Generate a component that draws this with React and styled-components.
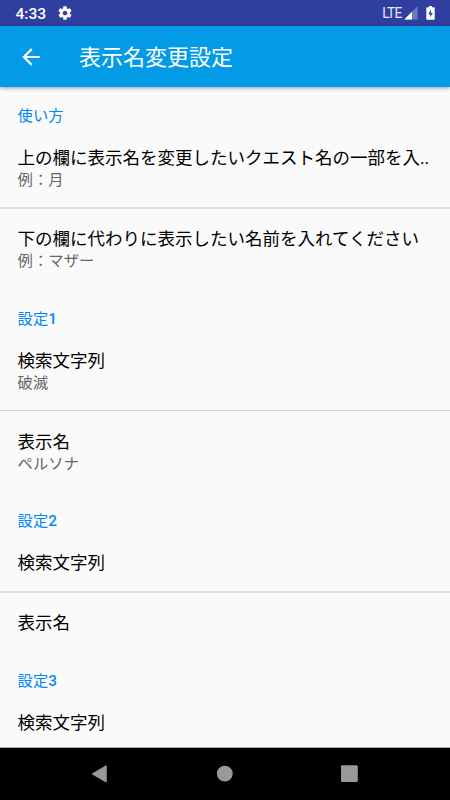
import styled, { createGlobalStyle } from "styled-components";

const settings = [
  {
    category: "使い方",
    rows: [
      {
        title: "上の欄に表示名を変更したいクエスト名の一部を入..",
        summary: "例：月",
        divider: "2px solid #e3e3e3",
      },
      {
        title: "下の欄に代わりに表示したい名前を入れてください",
        summary: "例：マザー",
        padding: "17.5px 17.5px 18.5px",
      },
    ],
  },
  {
    category: "設定",
    number: 1,
    rows: [
      {
        title: "検索文字列",
        summary: "破滅",
        divider: "1px solid #d2d2d2",
      },
      { title: "表示名", summary: "ペルソナ", padding: "18.5px 17.5px 17.5px" },
    ],
  },
  {
    category: "設定",
    number: 2,
    rows: [
      { title: "検索文字列", divider: "2px solid #e3e3e3" },
      { title: "表示名", padding: "17.5px" },
    ],
  },
  {
    category: "設定",
    number: 3,
    rows: [{ title: "検索文字列" }],
  },
];

const App = () => {
  return (
    <Screen>
      <GlobalStyle />
      <StatusBar>
        <StatusGroup>
          <Clock>4:33</Clock>
          <GearIcon />
        </StatusGroup>
        <StatusGroup>
          <Network>LTE</Network>
          <SignalIcon />
          <BatteryIcon />
        </StatusGroup>
      </StatusBar>
      <AppBar>
        <BackButton aria-label="戻る">
          <svg width="26" height="26" viewBox="0 0 24 24" fill="#fff">
            <path d="M20 11H7.83l5.59-5.59L12 4l-8 8 8 8 1.41-1.41L7.83 13H20v-2z" />
          </svg>
        </BackButton>
        <AppTitle>表示名変更設定</AppTitle>
      </AppBar>
      <List>
        {settings.map(({ category, number, rows }, i) => (
          <section key={i}>
            <Category>
              {category}
              {number && <Num>{number}</Num>}
            </Category>
            {rows.map(({ title, summary, divider, padding }) => (
              <Row key={title} $divider={divider} $padding={padding}>
                <Title>{title}</Title>
                {summary && <Summary>{summary}</Summary>}
              </Row>
            ))}
          </section>
        ))}
      </List>
      <NavBar>
        <NavButton aria-label="back">
          <svg width="20" height="20" viewBox="0 0 20 20">
            <path
              d="M1.2 9.9 L15.2 1.7 V18.1 Z"
              fill="#999"
              stroke="#999"
              strokeWidth="1"
              strokeLinejoin="round"
            />
          </svg>
        </NavButton>
        <NavButton aria-label="home">
          <svg width="20" height="20" viewBox="0 0 20 20">
            <circle cx="9.8" cy="9.7" r="7.9" fill="#999" />
          </svg>
        </NavButton>
        <NavButton aria-label="recent">
          <svg width="20" height="20" viewBox="0 0 20 20">
            <rect x="2" y="1.2" width="16.8" height="16.8" rx="1.2" fill="#999" />
          </svg>
        </NavButton>
      </NavBar>
    </Screen>
  );
};

const GearIcon = () => (
  <Gear viewBox="0 0 24 24" fill="#fff">
    <path d="M19.43 12.98c.04-.32.07-.64.07-.98s-.03-.66-.07-.98l2.11-1.65c.19-.15.24-.42.12-.64l-2-3.46c-.12-.22-.39-.3-.61-.22l-2.49 1c-.52-.4-1.08-.73-1.69-.98l-.38-2.65C14.46 2.18 14.25 2 14 2h-4c-.25 0-.46.18-.49.42l-.38 2.65c-.61.25-1.17.59-1.69.98l-2.49-1c-.23-.09-.49 0-.61.22l-2 3.46c-.13.22-.07.49.12.64l2.11 1.65c-.04.32-.07.65-.07.98s.03.66.07.98l-2.11 1.65c-.19.15-.24.42-.12.64l2 3.46c.12.22.39.3.61.22l2.49-1c.52.4 1.08.73 1.69.98l.38 2.65c.03.24.24.42.49.42h4c.25 0 .46-.18.49-.42l.38-2.65c.61-.25 1.17-.59 1.69-.98l2.49 1c.23.09.49 0 .61-.22l2-3.46c.12-.22.07-.49-.12-.64l-2.11-1.65zM12 15.5c-1.93 0-3.5-1.57-3.5-3.5s1.57-3.5 3.5-3.5 3.5 1.57 3.5 3.5-1.57 3.5-3.5 3.5z" />
  </Gear>
);

const SignalIcon = () => (
  <Signal viewBox="0 0 14 14">
    <path d="M0.3 13.5 L13.6 0.3 V13.5 Z" fill="#fff" fillOpacity="0.3" />
    <path d="M0.3 13.5 L8 5.8 V13.5 Z" fill="#fff" />
  </Signal>
);

const BatteryIcon = () => (
  <Battery viewBox="0 0 9 14">
    <path
      d="M3 0 H6 V1.3 H7.8 Q8.7 1.3 8.7 2.2 V13 Q8.7 13.8 7.8 13.8 H1.2 Q0.3 13.8 0.3 13 V2.2 Q0.3 1.3 1.2 1.3 H3 Z"
      fill="#fff"
    />
    <path d="M5 3.8 L2.2 8.2 H4.1 V11.3 L6.9 6.9 H5 Z" fill="#303f9f" />
  </Battery>
);

const GlobalStyle = createGlobalStyle`
  * {
    box-sizing: border-box;
  }
  body {
    margin: 0;
    overflow: hidden;
    font-family: Roboto, "Noto Sans CJK JP", sans-serif;
  }
`;

const Screen = styled.div`
  width: 450px;
  height: 800px;
  display: flex;
  flex-direction: column;
  overflow: hidden;
  background: #fafafa;
`;

const StatusBar = styled.div`
  flex: none;
  height: 26px;
  display: flex;
  justify-content: space-between;
  align-items: center;
  padding: 0 15.5px;
  background: #303f9f;
  color: #fff;
`;

const StatusGroup = styled.div`
  display: flex;
  align-items: center;
`;

const Clock = styled.span`
  font-size: 15.5px;
  font-weight: 500;
  line-height: 26px;
  margin-top: 1px;
`;

const Gear = styled.svg`
  width: 16px;
  height: 16px;
  margin-left: 11px;
`;

const Network = styled.span`
  color: #e6e8f4;
  font-size: 13.8px;
  line-height: 26px;
  letter-spacing: -0.8px;
`;

const Signal = styled.svg`
  width: 14px;
  height: 14px;
  margin-left: 2.5px;
`;

const Battery = styled.svg`
  width: 9px;
  height: 14px;
  margin-left: 7.5px;
`;

const AppBar = styled.header`
  flex: none;
  height: 61px;
  display: flex;
  align-items: center;
  padding-left: 17.5px;
  background: #039be5;
  box-shadow: 0 1px 4px rgba(0, 0, 0, 0.4);
  z-index: 1;
`;

const BackButton = styled.button`
  width: 26px;
  height: 26px;
  padding: 0;
  border: none;
  background: none;
`;

const AppTitle = styled.h1`
  margin: 2px 0 0 35.5px;
  color: #fff;
  font-size: 22px;
  font-weight: 400;
  line-height: 32px;
`;

const List = styled.main`
  flex: 1;
  min-height: 0;
  overflow: hidden;
`;

const Category = styled.h2`
  height: 40px;
  margin: 0;
  padding: 18px 17.5px 0;
  color: #0288f5;
  font-size: 15.3px;
  font-weight: 400;
  line-height: 22px;
  letter-spacing: 0.1px;
`;

const Num = styled.span`
  font-weight: 500;
`;

const Row = styled.div`
  padding: ${(props) => props.$padding || "18.5px 17.5px 16.5px"};
  border-bottom: ${(props) => props.$divider || "none"};
`;

const Title = styled.div`
  color: #000;
  font-size: 17.5px;
  line-height: 24px;
  white-space: nowrap;
`;

const Summary = styled.div`
  color: #666;
  font-size: 15.3px;
  line-height: 21px;
  letter-spacing: 0.1px;
`;

const NavBar = styled.nav`
  flex: none;
  height: 53px;
  display: flex;
  justify-content: center;
  align-items: center;
  gap: 104px;
  border-top: 1px solid #a8a8a8;
  background: #000;
`;

const NavButton = styled.button`
  width: 20px;
  height: 20px;
  padding: 0;
  border: none;
  background: none;
`;

export default App;
